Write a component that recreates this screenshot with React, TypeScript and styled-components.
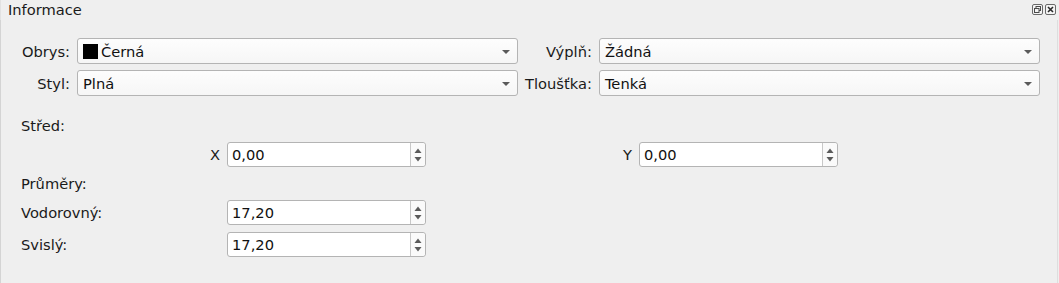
import React from 'react';
import styled, { createGlobalStyle } from 'styled-components';

const GlobalStyle = createGlobalStyle`
  html, body {
    margin: 0;
    padding: 0;
    background: #efefef;
  }
  body {
    font-family: "DejaVu Sans", "Noto Sans", sans-serif;
    font-size: 14.67px;
    color: #1a1a1a;
  }
`;

function App() {
  return (
    <Dock>
      <GlobalStyle />
      <TitleBar>
        <Title>Informace</Title>
        <TitleButtons>
          <TitleButton>
            <svg width="11" height="11" viewBox="0 0 11 11">
              <rect x="0.5" y="0.5" width="10" height="10" rx="1.5" fill="#f4f4f4" stroke="#6a6a6a" />
              <rect x="4" y="2.5" width="4.5" height="4" fill="none" stroke="#4a4a4a" />
              <rect x="2.5" y="4.5" width="4.5" height="4" fill="#f4f4f4" stroke="#4a4a4a" />
            </svg>
          </TitleButton>
          <TitleButton>
            <svg width="11" height="11" viewBox="0 0 11 11">
              <rect x="0.5" y="0.5" width="10" height="10" rx="1.5" fill="#f4f4f4" stroke="#6a6a6a" />
              <path d="M3 3 L8 8 M8 3 L3 8" stroke="#2a2a2a" strokeWidth="1.6" />
            </svg>
          </TitleButton>
        </TitleButtons>
      </TitleBar>
      <Body>
        <ComboGrid>
          <Label>Obrys:</Label>
          <Combo>
            <Swatch color="#000" />
            <ComboText>Černá</ComboText>
            <DropArrow />
          </Combo>
          <Label>Výplň:</Label>
          <Combo>
            <ComboText>Žádná</ComboText>
            <DropArrow />
          </Combo>
          <Label>Styl:</Label>
          <Combo>
            <ComboText>Plná</ComboText>
            <DropArrow />
          </Combo>
          <Label>Tloušťka:</Label>
          <Combo>
            <ComboText>Tenká</ComboText>
            <DropArrow />
          </Combo>
        </ComboGrid>

        <Section>
          <Heading>Střed:</Heading>
          <FieldRow>
            <FieldLabel align="right">X</FieldLabel>
            <Spin value="0,00" />
            <FieldLabel align="right">Y</FieldLabel>
            <Spin value="0,00" />
          </FieldRow>
          <Heading>Průměry:</Heading>
          <FieldRow>
            <FieldLabel align="left">Vodorovný:</FieldLabel>
            <Spin value="17,20" />
          </FieldRow>
          <FieldRow>
            <FieldLabel align="left">Svislý:</FieldLabel>
            <Spin value="17,20" />
          </FieldRow>
        </Section>
      </Body>
    </Dock>
  );
}

function Spin({ value }: { value: string }) {
  return (
    <SpinBox>
      <SpinText>{value}</SpinText>
      <SpinButtons>
        <svg width="8" height="16" viewBox="0 0 8 16">
          <path d="M0.5 6 L4 1.5 L7.5 6 Z" fill="#5a5a5a" />
          <path d="M0.5 10 L4 14.5 L7.5 10 Z" fill="#5a5a5a" />
        </svg>
      </SpinButtons>
    </SpinBox>
  );
}

export default App;

const Dock = styled.div`
  width: 1059px;
  height: 283px;
  display: flex;
  flex-direction: column;
  background: #efefef;
  box-sizing: border-box;
`;

const TitleBar = styled.div`
  height: 20px;
  display: flex;
  align-items: center;
  justify-content: space-between;
  padding: 0 3px 0 7px;
  box-sizing: border-box;
  border-left: 1px solid #e2e2e2;
`;

const Title = styled.span`
  line-height: 18px;
  color: #1a1a1a;
`;

const TitleButtons = styled.div`
  display: flex;
  gap: 2px;
  align-items: center;
  margin-top: -1px;
`;

const TitleButton = styled.span`
  width: 11px;
  height: 11px;
  display: flex;
`;

const Body = styled.div`
  flex: 1;
  border-left: 1px solid #d4d4d4;
  border-right: 1px solid #dedede;
  margin: 0 1px 0 0;
  padding: 18px 17px 0 20px;
  box-sizing: border-box;
`;

const ComboGrid = styled.div`
  display: grid;
  grid-template-columns: 49px 1fr auto 1fr;
  column-gap: 7px;
  row-gap: 6px;
  align-items: center;
`;

const Label = styled.span`
  text-align: right;
  white-space: nowrap;
`;

const Combo = styled.div`
  position: relative;
  height: 26px;
  display: flex;
  align-items: center;
  padding: 0 22px 0 5px;
  border: 1px solid #b4b4b4;
  border-radius: 3px;
  background: linear-gradient(#fdfdfd, #f6f6f6);
  box-sizing: border-box;
`;

const Swatch = styled.span<{ color: string }>`
  width: 15px;
  height: 15px;
  background: ${(p) => p.color};
  margin-right: 3px;
  flex: none;
`;

const ComboText = styled.span`
  color: #111;
`;

const DropArrow = styled.span`
  position: absolute;
  right: 7px;
  top: 11px;
  width: 0;
  height: 0;
  border-left: 4px solid transparent;
  border-right: 4px solid transparent;
  border-top: 4px solid #5a5a5a;
`;

const Section = styled.div`
  margin-top: 20px;
  display: flex;
  flex-direction: column;
`;

const Heading = styled.div`
  height: 19px;
  line-height: 19px;
  margin-bottom: 7px;
`;

const FieldRow = styled.div`
  display: grid;
  grid-template-columns: 199px 199px 199px 199px;
  column-gap: 7px;
  align-items: center;
  margin-bottom: 7px;
`;

const FieldLabel = styled.span<{ align: 'left' | 'right' }>`
  text-align: ${(p) => p.align};
`;

const SpinBox = styled.div`
  height: 25px;
  display: flex;
  border: 1px solid #b4b4b4;
  border-radius: 3px;
  background: #fff;
  box-sizing: border-box;
`;

const SpinText = styled.span`
  flex: 1;
  padding-left: 4px;
  line-height: 23px;
  color: #111;
`;

const SpinButtons = styled.span`
  width: 14px;
  border-left: 1px solid #c8c8c8;
  display: flex;
  align-items: center;
  justify-content: center;
  background: #fafafa;
  border-radius: 0 3px 3px 0;
`;
